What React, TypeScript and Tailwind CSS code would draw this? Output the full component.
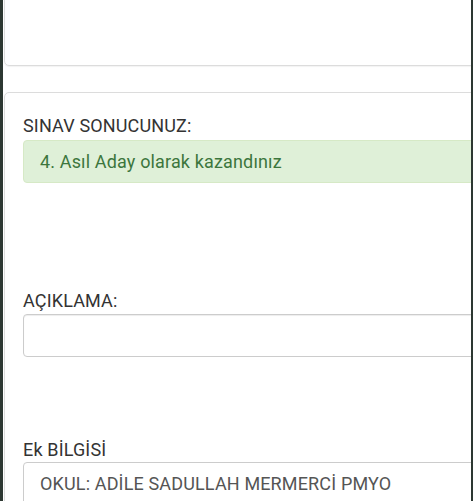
export default function App() {
	return (
		<div className="flex h-[501px] w-[473px] overflow-hidden bg-[#2d3832] font-['Roboto',sans-serif] text-[18px] leading-[25px] tracking-[0.15px] text-[#333]">
			<div className="ml-[3px] mr-[2px] flex-1 overflow-hidden bg-white">
				<div className="-mt-[20px] ml-px h-[86px] w-[520px] rounded-[5px] border border-[#dcdcdc] shadow-[0_1px_1px_rgba(0,0,0,0.05)]" />
				<div className="mt-[26px] ml-px w-[520px] rounded-[5px] border border-[#dcdcdc] pt-[20px] pl-[18px]">
					<div>SINAV SONUCUNUZ:</div>
					<div className="mt-[1.5px] flex h-[43px] w-[500px] items-center rounded-[4px] border border-[#d6e9c6] bg-[#dff0d8] pl-[16px] text-[#3c763d]">
						4. Asıl Aday olarak kazandınız
					</div>
					<div className="mt-[105px]">AÇIKLAMA:</div>
					<div className="mt-px h-[43px] w-[500px] rounded-[4px] border border-[#cccccc] shadow-[inset_0_1px_1px_rgba(0,0,0,0.075)]" />
					<div className="mt-[80px]">Ek BİLGİSİ</div>
					<div className="mt-[0.5px] flex h-[43px] w-[500px] items-center rounded-[4px] border border-[#cccccc] pl-[16px] text-[#555]">
						OKUL: ADİLE SADULLAH MERMERCİ PMYO
					</div>
				</div>
			</div>
		</div>
	);
}
